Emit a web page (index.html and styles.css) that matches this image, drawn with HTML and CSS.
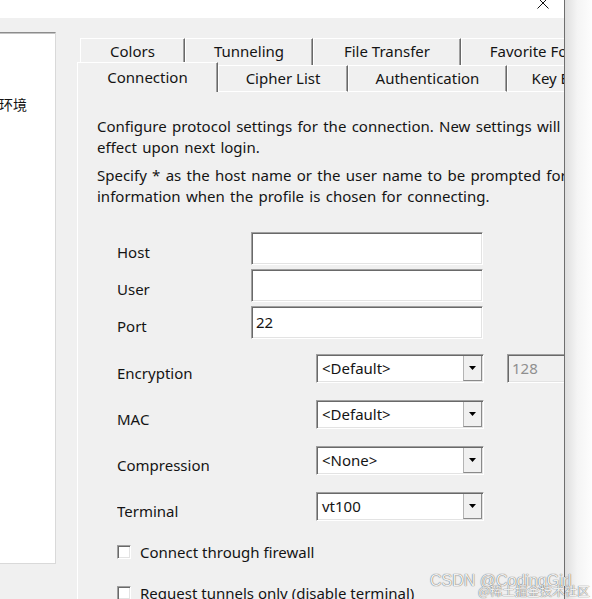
FILE: index.html
```html
<!DOCTYPE html>
<html>
<head>
<meta charset="utf-8">
<title>Session Options</title>
<link rel="stylesheet" href="styles.css">
</head>
<body>
<div class="screen">
  <div class="window">
    <div class="titlebar">
      <svg class="close" width="12" height="9" viewBox="0 3 12 9"><path d="M0.5 0.5 L11.5 11.5 M11.5 0.5 L0.5 11.5" stroke="#111" stroke-width="1" fill="none"/></svg>
    </div>
    <div class="dialog">
      <div class="tree"><div class="tree-item">环境</div></div>
      <div class="tabctl">
        <div class="tabrow back">
          <div class="tab t-colors">Colors</div>
          <div class="tab t-tunnel">Tunneling</div>
          <div class="tab t-file">File Transfer</div>
          <div class="tab t-fav">Favorite Folders</div>
        </div>
        <div class="tabrow front">
          <div class="tab sel t-conn">Connection</div>
          <div class="tab t-cipher">Cipher List</div>
          <div class="tab t-auth">Authentication</div>
          <div class="tab t-key">Key Exchange</div>
        </div>
        <div class="panel">
          <p class="desc">Configure protocol settings for the connection. New settings will take<br>effect upon next login.</p>
          <p class="desc">Specify * as the host name or the user name to be prompted for this<br>information when the profile is chosen for connecting.</p>
          <div class="form">
            <div class="row text-row">
              <div class="lbl">Host</div>
              <div class="field"></div>
            </div>
            <div class="row text-row">
              <div class="lbl">User</div>
              <div class="field"></div>
            </div>
            <div class="row text-row">
              <div class="lbl">Port</div>
              <div class="field">22</div>
            </div>
            <div class="row select-row first-select">
              <div class="lbl">Encryption</div>
              <div class="combo"><div class="val">&lt;Default&gt;</div><div class="btn"><svg width="7" height="4" viewBox="0 0 7 4"><path d="M0 0H7L3.5 4Z" fill="#000"/></svg></div></div>
              <div class="num">128</div>
            </div>
            <div class="row select-row">
              <div class="lbl">MAC</div>
              <div class="combo"><div class="val">&lt;Default&gt;</div><div class="btn"><svg width="7" height="4" viewBox="0 0 7 4"><path d="M0 0H7L3.5 4Z" fill="#000"/></svg></div></div>
            </div>
            <div class="row select-row">
              <div class="lbl">Compression</div>
              <div class="combo"><div class="val">&lt;None&gt;</div><div class="btn"><svg width="7" height="4" viewBox="0 0 7 4"><path d="M0 0H7L3.5 4Z" fill="#000"/></svg></div></div>
            </div>
            <div class="row select-row">
              <div class="lbl">Terminal</div>
              <div class="combo"><div class="val">vt100</div><div class="btn"><svg width="7" height="4" viewBox="0 0 7 4"><path d="M0 0H7L3.5 4Z" fill="#000"/></svg></div></div>
            </div>
            <div class="check first-check"><span class="box"></span><span>Connect through firewall</span></div>
            <div class="check second-check"><span class="box"></span><span>Request tunnels only (disable terminal)</span></div>
          </div>
        </div>
      </div>
    </div>
  </div>
  <div class="outside"></div>
</div>
<div class="watermark">
  <div class="wm-main">CSDN @CodingGirl</div>
  <div class="wm-sub">@稀土掘金技术社区</div>
</div>
</body>
</html>
```

FILE: styles.css
```css
* { box-sizing: border-box; }
html, body { margin: 0; padding: 0; }
body {
  width: 592px;
  height: 599px;
  overflow: hidden;
  background: #fff;
  font-family: "Noto Sans", "Noto Sans CJK SC", sans-serif;
  font-size: 15px;
  color: #141414;
  position: relative;
}
.screen { display: flex; width: 592px; height: 599px; }
.window {
  width: 565px;
  flex: none;
  border-right: 1px solid #6e6e6e;
  display: flex;
  flex-direction: column;
  overflow: hidden;
}
.titlebar {
  height: 18px;
  flex: none;
  background: #fff;
  display: flex;
  justify-content: flex-end;
  padding-right: 15px;
}
.close { display: block; }
.dialog {
  flex: 1;
  background: #f0f0f0;
  display: flex;
  overflow: hidden;
}
.tree {
  flex: none;
  width: 56px;
  height: 532px;
  margin-top: 14px;
  background: #fff;
  border-top: 1px solid #8c8c8c;
  box-shadow: inset 0 1px 0 #c4c4c4;
  border-right: 1px solid #d9d9d9;
  border-bottom: 1px solid #d9d9d9;
  overflow: hidden;
}
.tree-item {
  padding-top: 61px;
  margin-left: -1px;
  line-height: 20px;
  font-size: 14px;
  font-family: "Noto Sans CJK SC", sans-serif;
  white-space: nowrap;
}
.tabctl {
  flex: none;
  width: 640px;
  margin-left: 21px;
  margin-top: 20px;
  display: flex;
  flex-direction: column;
}
.tabrow { display: flex; flex: none; }
.back { height: 27px; padding-left: 3px; }
.front { height: 30px; margin-top: -3px; align-items: flex-end; }
.tab {
  flex: none;
  height: 27px;
  text-align: center;
  white-space: nowrap;
  overflow: hidden;
  background: #f0f0f0;
  border-top: 1px solid #fff;
  border-left: 1px solid #fff;
  border-right: 1px solid #696969;
  box-shadow: inset -1px 0 0 #a0a0a0;
  line-height: 25px;
}
.front .tab { border-bottom: 1px solid #fff; }
.front .tab.sel { height: 30px; border-bottom: 0; line-height: 28px; }
.t-colors { width: 105px; }
.t-tunnel { width: 128px; }
.t-file { width: 148px; }
.t-fav { width: 170px; }
.t-conn { width: 141px; }
.t-cipher { width: 130px; }
.t-auth { width: 159px; }
.t-key { width: 146px; }

.panel {
  flex: 1;
  border-left: 1px solid #fff;
  padding: 24px 0 0 19px;
}
.desc {
  margin: 0 0 7px;
  line-height: 21px;
  white-space: nowrap;
  word-spacing: 1.4px;
}
.form { margin-top: 25px; padding-left: 20px; }
.row { display: flex; align-items: flex-start; }
.lbl {
  width: 92px;
  flex: none;
  overflow: hidden;
  white-space: nowrap;
  line-height: 20px;
}
.text-row + .text-row { margin-top: 4px; }
.text-row .lbl { margin-top: 10px; }
.field, .combo, .num, .box {
  background: #fff;
  border: 1px solid;
  border-color: #a0a0a0 #fff #fff #a0a0a0;
  box-shadow: inset 1px 1px 0 #696969, inset -1px -1px 0 #e3e3e3;
}
.field {
  flex: none;
  width: 232px;
  height: 33px;
  margin-left: 42px;
  padding-left: 4px;
  line-height: 31px;
}
.select-row { margin-top: 17px; }
.first-select { margin-top: 15px; }
.select-row .lbl { margin-top: 9px; }
.combo {
  flex: none;
  width: 168px;
  height: 29px;
  margin-left: 107px;
  display: flex;
  padding: 1px;
}
.val { flex: 1; padding-left: 4px; line-height: 25px; white-space: nowrap; }
.btn {
  flex: none;
  width: 19px;
  background: #f0f0f0;
  border-left: 1px solid #b4b4b4;
  border-bottom: 1px solid #8a8a8a;
  border-right: 1px solid #8a8a8a;
  display: flex;
  align-items: center;
  justify-content: center;
}
.btn svg { display: block; }
.num {
  flex: none;
  width: 70px;
  height: 29px;
  margin-left: 23px;
  background: #f0f0f0;
  color: #8f8f8f;
  padding-left: 4px;
  line-height: 27px;
}
.check {
  display: flex;
  align-items: center;
  height: 20px;
  margin-top: 20px;
  white-space: nowrap;
}
.first-check { margin-top: 21px; }
.second-check { margin-top: 21px; }
.box { flex: none; width: 14px; height: 14px; margin-right: 9px; }

.outside {
  flex: 1;
  background: linear-gradient(to right, #dedede, #f4f4f4 45%, #fdfdfd);
}
.watermark {
  position: absolute;
  left: 430px;
  top: 571px;
  font-family: "Liberation Sans", "Noto Sans CJK SC", sans-serif;
  color: rgba(255, 255, 255, 0.92);
  text-shadow: 0 0 1px rgba(0, 0, 0, 0.55), 0 0 1px rgba(0, 0, 0, 0.4);
  white-space: nowrap;
}
.wm-main { font-size: 16px; line-height: 20px; }
.wm-sub {
  font-size: 12.5px;
  line-height: 14px;
  margin-top: -7px;
  margin-left: 48px;
  font-family: "Noto Sans CJK SC", sans-serif;
}
```
